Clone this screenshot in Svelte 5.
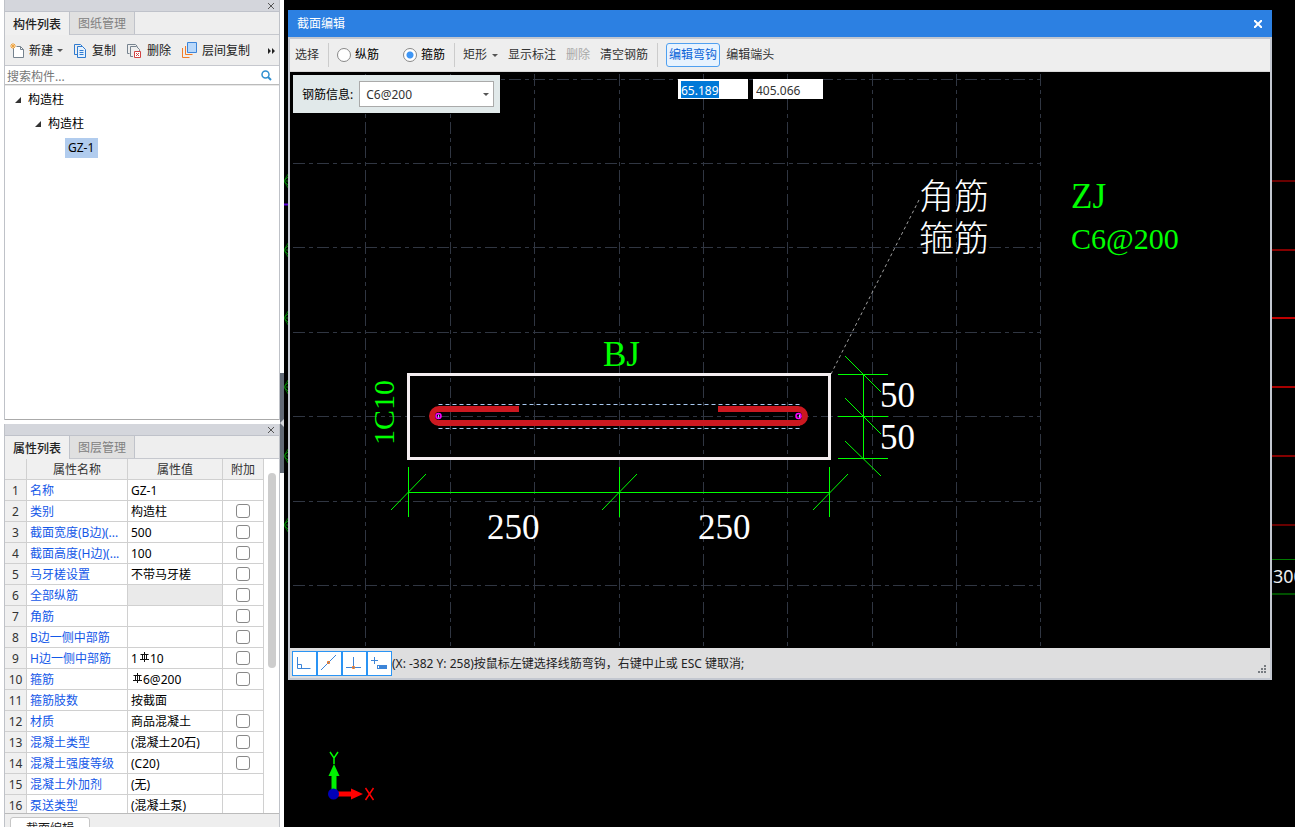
<script lang="ts">
	type Row = {
		name: string;
		value?: string;
		prefix?: string;
		bar?: boolean;
		check?: boolean;
		muted?: boolean;
	};

	const rows: Row[] = [
		{ name: '名称', value: 'GZ-1' },
		{ name: '类别', value: '构造柱', check: true },
		{ name: '截面宽度(B边)(...', value: '500', check: true },
		{ name: '截面高度(H边)(...', value: '100', check: true },
		{ name: '马牙槎设置', value: '不带马牙槎', check: true },
		{ name: '全部纵筋', check: true, muted: true },
		{ name: '角筋', check: true },
		{ name: 'B边一侧中部筋', check: true },
		{ name: 'H边一侧中部筋', prefix: '1', bar: true, value: '10', check: true },
		{ name: '箍筋', bar: true, value: '6@200', check: true },
		{ name: '箍筋肢数', value: '按截面' },
		{ name: '材质', value: '商品混凝土', check: true },
		{ name: '混凝土类型', value: '(混凝土20石)', check: true },
		{ name: '混凝土强度等级', value: '(C20)', check: true },
		{ name: '混凝土外加剂', value: '(无)' },
		{ name: '泵送类型', value: '(混凝土泵)' }
	];

	// drawing grid
	const gridX = [75, 160, 244, 329, 413, 497, 582, 666, 750];
	const gridY = [7, 91, 175, 260, 344, 429, 513];

	// axes of the plan behind the dialog
	const axes = [
		{ y: 181, color: '#8b0000' },
		{ y: 250, color: '#b00000' },
		{ y: 318, color: '#ff0000' },
		{ y: 387, color: '#e00000' },
		{ y: 456, color: '#b00000' },
		{ y: 525, color: '#8b0000' }
	];

	let mode = $state('stirrup');
	let rebar = $state('C6@200');
	let search = $state('');
	let x = $state('65.189');
	let y = $state('405.066');
</script>

<div class="app">
	<aside>
		<section class="pane components">
			<div class="grip">
				<button type="button" aria-label="关闭">
					<svg width="6" height="6" stroke="#555"><path d="M0 0l6 6M6 0L0 6" /></svg>
				</button>
			</div>
			<div class="tabs">
				<button type="button" class="tab active">构件列表</button>
				<button type="button" class="tab">图纸管理</button>
			</div>
			<div class="tools">
				<button type="button">
					<svg width="15" height="16" fill="none">
						<path d="M3.500 5v9.500h10v-8l-3-3h-4M10.500 3.500v3h3" stroke="#76838f" fill="#fff" />
						<path d="M3 0v6M0 3h6M1 1l4 4M5 1l-4 4" stroke="#f2a33a" />
					</svg>
					新建 <i class="caret"></i>
				</button>
				<button type="button">
					<svg width="13" height="16" fill="none" stroke="#2f7bd0">
						<path d="M3 11.500H.5v-10h6l2 2" />
						<path d="M3.500 3.500h5l3 3v8h-8zM5.500 7.500h4M5.500 9.500h4M5.500 11.500h4" fill="#e5f1fd" />
					</svg>
					复制
				</button>
				<button type="button">
					<svg width="15" height="16" fill="none">
						<path d="M2.500 10.500h-2v-9h8l2 2M6 13.500H3.500v-10h6l3 3v2" stroke="#76838f" />
						<path d="M7.500 8.500h6v6h-6z" fill="#fff" stroke="#d14343" />
						<path d="M9 10l3 3M12 10l-3 3" stroke="#d14343" />
					</svg>
					删除
				</button>
				<button type="button">
					<svg width="15" height="17" fill="none">
						<path d="M.5 6v9.500h7M3.500 4v8.500h7" stroke="#f07c28" />
						<path d="M5.500 .5h9v10h-9z" fill="#b9d8fa" stroke="#3d85d8" />
					</svg>
					层间复制
				</button>
				<button type="button" class="more" aria-label="更多">
					<svg width="8" height="6" fill="#222"><path d="M0 0l3 3-3 3zM4 0l3 3-3 3z" /></svg>
				</button>
			</div>
			<label class="search">
				<input type="text" placeholder="搜索构件..." aria-label="搜索构件" bind:value={search} />
				<svg width="11" height="11" fill="none" stroke="#2f8fd0">
					<circle cx="4.500" cy="4.500" r="3.500" stroke-width="1.500" />
					<path d="M7 7l3 3" stroke-width="2" />
				</svg>
			</label>
			<ul class="tree">
				<li><i class="open"></i>构造柱</li>
				<li class="l2"><i class="open"></i>构造柱</li>
				<li class="l3"><span class="selected">GZ-1</span></li>
			</ul>
		</section>

		<section class="pane props">
			<div class="grip">
				<button type="button" aria-label="关闭">
					<svg width="6" height="6" stroke="#555"><path d="M0 0l6 6M6 0L0 6" /></svg>
				</button>
			</div>
			<div class="tabs">
				<button type="button" class="tab active">属性列表</button>
				<button type="button" class="tab">图层管理</button>
			</div>
			<div class="grid">
				<table>
					<thead>
						<tr>
							<th class="num"></th>
							<th class="name">属性名称</th>
							<th class="value">属性值</th>
							<th class="extra">附加</th>
						</tr>
					</thead>
					<tbody>
						{#each rows as row, i}
							<tr>
								<td class="num">{i + 1}</td>
								<td class="name">{row.name}</td>
								<td class="value" class:muted={row.muted}>
									{row.prefix ?? ''}{#if row.bar}<svg class="bar" width="11" height="11" fill="none" stroke="#111">
											<path d="M1 7.500h9M5.500 0v10M3.500 2v5M7.500 2v5M1.500 2.500h8" />
										</svg>{/if}{row.value ?? ''}
								</td>
								<td class="extra">
									{#if row.check}<input type="checkbox" aria-label={row.name} />{/if}
								</td>
							</tr>
						{/each}
					</tbody>
				</table>
				<div class="scroll"><div class="thumb"></div></div>
			</div>
			<div class="bottom"><button type="button">截面编辑</button></div>
		</section>
	</aside>

	<button type="button" class="splitter" aria-label="折叠">
		<svg width="4" height="8" fill="#d5d8dd"><path d="M4 0v8L0 4z" /></svg>
	</button>

	<main>
		<svg class="plan" width="100%" height="100%" fill="none">
			{#each axes as axis}
				<path d="M6 {axis.y - 10}l-6 10 6 10M0 {axis.y}h6M0 {axis.y}l6-6M0 {axis.y}l6 6" stroke="#007a00" />
				<line x1="900" x2="100%" y1={axis.y} y2={axis.y} stroke={axis.color} stroke-width="1.500" />
			{/each}
			<path d="M0 204.500h6" stroke="#5a00d8" stroke-width="2" />
			<line x1="900" x2="100%" y1="559.500" y2="559.500" stroke="#007a00" />
			<line x1="900" x2="100%" y1="594" y2="594" stroke="#005000" stroke-width="2" />
			<text x="989" y="583" class="plan-text">300</text>

			<path d="M50 790v-14" stroke="#00f000" stroke-width="5" />
			<path d="M44.500 776l5.500-12 5.500 12z" fill="#00f000" />
			<path d="M54 794h13" stroke="#f00" stroke-width="5" />
			<path d="M67 788.500l12 5.500-12 5.500z" fill="#f00" />
			<circle cx="49.500" cy="794" r="5.500" fill="#0000b8" />
			<path d="M46 752l4 6 4-6M50 758v6" stroke="#0f0" stroke-width="1.500" />
			<path d="M81.500 788l8 12M89.500 788l-8 12" stroke="#f00" stroke-width="1.500" />
		</svg>

		<div class="dialog" role="dialog" aria-label="截面编辑">
			<header>
				<span>截面编辑</span>
				<button type="button" aria-label="关闭">
					<svg width="8" height="8" stroke="#fff" stroke-width="2"><path d="M0 0l8 8M8 0L0 8" /></svg>
				</button>
			</header>
			<div class="bar-tools">
				<button type="button">选择</button>
				<span class="sep"></span>
				<label class="radio"><input type="radio" value="main" bind:group={mode} />纵筋</label>
				<label class="radio second"><input type="radio" value="stirrup" bind:group={mode} />箍筋</label>
				<span class="sep"></span>
				<button type="button" class="shape">矩形 <i class="caret"></i></button>
				<button type="button">显示标注</button>
				<button type="button" disabled>删除</button>
				<button type="button">清空钢筋</button>
				<span class="sep"></span>
				<button type="button" class="on">编辑弯钩</button>
				<button type="button">编辑端头</button>
			</div>

			<div class="canvas">
				<svg width="100%" height="100%" fill="none">
					<g stroke="#303642" stroke-dasharray="12 4 4 4" shape-rendering="crispEdges">
						{#each gridX as gx}
							<path d="M{gx}.5 2V575" />
						{/each}
						{#each gridY as gy}
							<path d="M3 {gy}.5H750" />
						{/each}
					</g>

					<path d="M541 302L630 126" stroke="#a0a0a0" stroke-dasharray="3 3" />
					<path d="M118.500 302.500h421v84h-421z" stroke="#f4eef0" stroke-width="3" />
					<path d="M148.500 332.500h361v24h-361z" stroke="#a8c8f0" stroke-dasharray="4 3" />
					<path
						d="M229 337H149a7 7 0 0 0 0 14H508a7 7 0 0 0 0-14H428"
						stroke="#cc1820"
						stroke-width="6"
					/>
					<circle cx="148.500" cy="344" r="2.500" stroke="#f0f" stroke-width="1.500" />
					<circle cx="508.500" cy="344" r="2.500" stroke="#f0f" stroke-width="1.500" />

					<g stroke="#0f0">
						<path d="M118 420.500h422M118.500 395v50M329.500 395v50M539.500 395v50" />
						<path d="M101 438l35-36M312 438l35-36M523 438l35-36" />
						<path d="M573.500 302v84M548 302.500h50M548 344.500h50M548 386.500h50" />
						<path d="M555 284l36 36M555 326l36 36M555 369l36 35" />
					</g>

					<g class="white">
						<text x="629" y="137">角筋</text>
						<text x="629" y="179">箍筋</text>
						<text x="590" y="335">50</text>
						<text x="590" y="377">50</text>
						<text x="197" y="467">250</text>
						<text x="408" y="467">250</text>
					</g>
					<g class="green">
						<text x="781" y="136">ZJ</text>
						<text x="781" y="177" class="narrow">C6@200</text>
						<text x="313" y="294">BJ</text>
						<text class="narrow" transform="translate(104 373) rotate(-90)">1C10</text>
					</g>
				</svg>

				<div class="rebar">
					<label for="rebar">钢筋信息:</label>
					<span class="combo">
						<select id="rebar" bind:value={rebar}>
							<option>C6@200</option>
						</select>
						<i class="caret"></i>
					</span>
				</div>
				<div class="coords">
					<label class="coord picked">
						<input type="text" aria-label="X" bind:value={x} />
					</label>
					<label class="coord">
						<input type="text" aria-label="Y" bind:value={y} />
					</label>
				</div>
			</div>

			<footer>
				<button type="button" aria-label="正交">
					<svg width="23" height="23" fill="none" stroke="#3d85d8">
						<path d="M4.500 5v11.500h13M4.500 12.500h4v4" />
					</svg>
				</button>
				<button type="button" aria-label="中点">
					<svg width="23" height="23" fill="none" stroke="#3d85d8">
						<path d="M3 18L18 3" />
						<path d="M9.500 9.500h2v2h-2z" stroke="#f07c28" />
					</svg>
				</button>
				<button type="button" aria-label="垂点">
					<svg width="23" height="23" fill="none" stroke="#3d85d8">
						<path d="M3 15.500h15M10.500 5v10" />
						<path d="M9.500 14.500h2v2h-2z" stroke="#f07c28" />
					</svg>
				</button>
				<button type="button" aria-label="动态输入">
					<svg width="23" height="23" fill="none" stroke="#3d85d8">
						<path d="M3 8.500h7M6.500 5v7" />
						<path d="M9 13h10v4H9z" fill="#3d85d8" stroke="none" />
						<path d="M10.500 14v2" stroke="#fff" />
					</svg>
				</button>
				<span>(X: -382 Y: 258)按鼠标左键选择线筋弯钩，右键中止或 ESC 键取消;</span>
				<svg class="resize" width="8" height="8" fill="#777b80">
					<path d="M6 0h2v2H6zM3 3h2v2H3zM6 3h2v2H6zM0 6h2v2H0zM3 6h2v2H3zM6 6h2v2H6z" />
				</svg>
			</footer>
		</div>
	</main>
</div>

<style>
	:global(body) {
		margin: 0;
		background: #000;
	}

	.app {
		position: relative;
		display: flex;
		height: 100vh;
		overflow: hidden;
		font: 12px/16px 'Noto Sans', 'Noto Sans CJK SC', sans-serif;
		color: #1a1a1a;
	}

	button,
	input,
	select {
		font: inherit;
		color: inherit;
		box-sizing: border-box;
	}

	button {
		display: flex;
		align-items: center;
		padding: 0;
		border: 0;
		background: none;
		white-space: nowrap;
	}

	.caret {
		border: 3px solid transparent;
		border-top-color: #555;
		border-bottom: 0;
	}

	aside {
		flex: none;
		width: 276px;
		padding: 0 4px;
		background: #fff;
		display: flex;
		flex-direction: column;
		gap: 4px;
	}

	.pane {
		display: flex;
		flex-direction: column;
		min-height: 0;
		border: solid #bfc2c8;
		border-width: 0 1px;
	}

	.components {
		flex: 420 1 0;
	}

	.props {
		flex: 403 1 0;
	}

	.grip {
		display: flex;
		justify-content: flex-end;
		height: 11px;
		flex: none;
		padding-right: 5px;
		background: #d4d6dc;
		border-bottom: 1px solid #bfc2ca;
	}

	.tabs {
		display: flex;
		flex: none;
		height: 22px;
		background: #eee;
		border-bottom: 1px solid #c6c8ce;
	}

	.tab {
		padding: 2px 8px 0;
		border-right: 1px solid #c0c3ca;
		background: #e0e0e0;
		color: #808080;
	}

	.tab.active {
		background: #f0f0f0;
		color: #222;
		font-weight: 500;
		margin-bottom: -1px;
	}

	.tools {
		display: flex;
		flex: none;
		align-items: center;
		gap: 11px;
		height: 29px;
		padding: 1px 0 0 5px;
		background: #eee;
		border-bottom: 1px solid #c6c8ce;
	}

	.tools button {
		gap: 4px;
	}

	.tools button + button {
		gap: 5px;
	}

	.tools .more {
		margin-left: auto;
		padding-right: 3px;
	}

	.search {
		display: flex;
		flex: none;
		align-items: center;
		height: 18px;
		padding-right: 7px;
		border-bottom: 1px solid #bbb;
	}

	.search input {
		flex: 1;
		min-width: 0;
		height: 18px;
		padding: 2px 2px 0;
		border: 0;
		outline: 0;
		background: none;
	}

	.search input::placeholder {
		color: #777;
		opacity: 1;
	}

	.tree {
		flex: 1;
		margin: 0;
		padding: 2px 0 0;
		list-style: none;
		color: #000;
		border-top: 1px solid #e8e8e8;
		border-bottom: 1px solid #aaa;
	}

	.tree li {
		display: flex;
		align-items: center;
		height: 24px;
		gap: 7px;
		padding-left: 10px;
	}

	.tree .l2 {
		padding-left: 30px;
	}

	.tree .l3 {
		padding-left: 60px;
	}

	.open {
		width: 6px;
		height: 6px;
		background: #333;
		clip-path: polygon(100% 0, 100% 100%, 0 100%);
	}

	.selected {
		padding: 2px 4px 2px 3px;
		background: #b1ccee;
	}

	.grid {
		flex: 1;
		display: flex;
		min-height: 0;
		overflow: hidden;
		border-bottom: 1px solid #bbb;
	}

	table {
		flex: none;
		align-self: flex-start;
		width: 259px;
		table-layout: fixed;
		border-collapse: separate;
		border-spacing: 0;
	}

	th,
	td {
		box-sizing: border-box;
		height: 21px;
		padding: 2px 3px 0;
		border: solid #d0d0d0;
		border-width: 0 1px 1px 0;
		text-align: left;
		font-weight: 400;
		white-space: nowrap;
	}

	th {
		background: #f0f0f0;
		text-align: center;
		color: #333;
	}

	.num {
		width: 22px;
		padding: 2px 0 0;
		background: #f0f0f0;
		text-align: center;
		color: #333;
	}

	.name {
		width: 101px;
	}

	td.name {
		color: #1458e8;
	}

	.value {
		width: 95px;
	}

	td.value {
		color: #000;
	}

	.muted {
		background: #eaeaea;
	}

	.bar {
		vertical-align: -1px;
		margin: 0 0 1px 1px;
	}

	.extra {
		width: 41px;
		text-align: center;
	}

	td.extra {
		padding: 0;
	}

	.extra input {
		appearance: none;
		display: block;
		width: 14px;
		height: 14px;
		margin: 0 auto;
		border: 1px solid #888;
		border-radius: 3px;
		background: #fff;
	}

	.scroll {
		flex: 1;
		padding: 14px 3px 0 4px;
	}

	.thumb {
		height: 195px;
		border-radius: 4px;
		background: #cdcdcd;
	}

	.bottom {
		display: flex;
		flex: none;
		height: 13px;
		padding-left: 5px;
		background: #eee;
		align-items: flex-start;
		overflow: hidden;
	}

	.bottom button {
		margin-top: 3px;
		padding: 3px 15px;
		border: 1px solid #c6c6c6;
		border-radius: 3px;
		background: #fff;
	}

	.splitter {
		position: absolute;
		left: 280px;
		top: 373px;
		width: 4px;
		height: 100px;
		background: #626a76;
	}

	main {
		position: relative;
		flex: 1;
		min-width: 0;
		background: #000;
	}

	.plan {
		display: block;
	}

	.plan-text {
		font-size: 18px;
		fill: #eee;
	}

	/* floating window over the plan */
	.dialog {
		position: absolute;
		inset: 10px 23px 147px 4px;
		display: flex;
		flex-direction: column;
		box-sizing: border-box;
		border: solid #c3c7d0;
		border-width: 0 2px 2px;
		background: #000;
	}

	header {
		display: flex;
		align-items: center;
		justify-content: space-between;
		flex: none;
		height: 27px;
		margin: 0 -2px;
		padding: 0 10px 0 9px;
		background: #2c80e2;
		color: #fff;
	}

	.bar-tools {
		display: flex;
		align-items: center;
		flex: none;
		height: 32px;
		padding-left: 5px;
		gap: 10px;
		background: #eee;
		border-top: 2px solid #c3c7cf;
		border-bottom: 1px solid #d8d8d8;
		color: #333;
	}

	.bar-tools button {
		gap: 5px;
	}

	.bar-tools button:disabled {
		color: #a8a8a8;
	}

	.sep {
		width: 1px;
		height: 24px;
		margin: 0 -2px 0 -1px;
		background: #ccc;
	}

	.radio {
		display: flex;
		align-items: center;
		gap: 4px;
		color: #000;
	}

	.radio.second {
		margin-left: 14px;
	}

	.radio input {
		appearance: none;
		width: 14px;
		height: 14px;
		margin: 0;
		border: 1px solid #888;
		border-radius: 50%;
		background: #fff;
	}

	.radio input:checked {
		background: radial-gradient(#3f96f5 0 3px, #fff 4px);
	}

	.bar-tools .on {
		height: 24px;
		padding: 0 2px;
		margin-right: -4px;
		border: 1px solid #50a0f0;
		border-radius: 3px;
		background: #e8f3fe;
		color: #0a64d8;
	}

	.canvas {
		position: relative;
		flex: 1;
		min-height: 0;
	}

	.canvas > svg {
		display: block;
	}

	.canvas text {
		font: 300 35px 'Liberation Serif', 'Noto Sans CJK SC', serif;
	}

	.canvas .white {
		fill: #fff;
	}

	.canvas .green {
		fill: #0f0;
	}

	.canvas .narrow {
		font-size: 30px;
	}

	.rebar {
		position: absolute;
		left: 3px;
		top: 3px;
		display: flex;
		align-items: center;
		gap: 6px;
		height: 38px;
		padding: 0 6px 0 9px;
		background: #e1e9ea;
		color: #000;
	}

	.rebar label {
		padding-top: 2px;
	}

	.combo {
		position: relative;
	}

	.combo select {
		appearance: none;
		display: block;
		width: 135px;
		height: 26px;
		padding: 2px 6px 0;
		border: 1px solid #aaa;
		border-radius: 0;
		background: #fff;
		color: #333;
	}

	.combo .caret {
		position: absolute;
		right: 5px;
		top: 12px;
	}

	.coords {
		position: absolute;
		left: 388px;
		top: 7px;
		display: flex;
		gap: 5px;
	}

	.coord {
		display: flex;
		width: 70px;
		height: 20px;
		padding: 2px 3px;
		box-sizing: border-box;
		background: #fff;
		color: #333;
	}

	.coord input {
		width: 60px;
		height: 17px;
		padding: 1px 0 0;
		border: 0;
		outline: 0;
		background: none;
	}

	.picked input {
		width: 38px;
		background: #0078d7;
		color: #fff;
	}

	footer {
		display: flex;
		align-items: center;
		flex: none;
		height: 30px;
		padding: 0 4px 0 2px;
		background: #dededf;
		color: #222;
	}

	footer button {
		border: 1px solid #2a94f4;
		background: #fff;
	}

	footer span {
		padding-top: 2px;
		white-space: nowrap;
	}

	.resize {
		margin: 12px 0 0 auto;
	}
</style>
